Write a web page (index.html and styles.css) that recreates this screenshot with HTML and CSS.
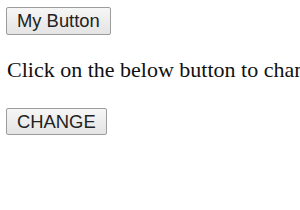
FILE: index.html
```html
<!DOCTYPE html>
<html lang="en">
<head>
    <meta charset="UTF-8">
    <title>Change Button Text</title>
    <link rel="stylesheet" href="styles.css">
</head>
<body>
    <button class="btn btn-top" id="myButton">My Button</button>
    <p class="info">Click on the below button to change the text of the above button.</p>
    <button class="btn btn-change" onclick="changeText()">CHANGE</button>

    <script>
        // swap the label of the first button
        function changeText() {
            document.getElementById('myButton').textContent = 'Changed!';
        }
    </script>
</body>
</html>
```

FILE: styles.css
```css
body {
    margin: 0;
    padding: 7px 0 0 6px;
    background-color: #fff;
    font-family: "Liberation Serif", "Times New Roman", serif;
    overflow: hidden;
}
.btn {
    display: block;
    font-family: "Liberation Sans", Arial, sans-serif;
    font-size: 18.4px;
    color: #222;
    background: linear-gradient(#f6f6f6, #e4e4e4);
    border: 1px solid #9c9c9c;
    border-radius: 2px;
    padding: 0 10px;
    margin: 0;
    cursor: pointer;
}
.btn-top {
    height: 28px;
}
.btn-change {
    height: 27px;
}
.info {
    margin: 22px 0 25px 1px;
    font-size: 22px;
    color: #111;
    white-space: nowrap;
}
```
